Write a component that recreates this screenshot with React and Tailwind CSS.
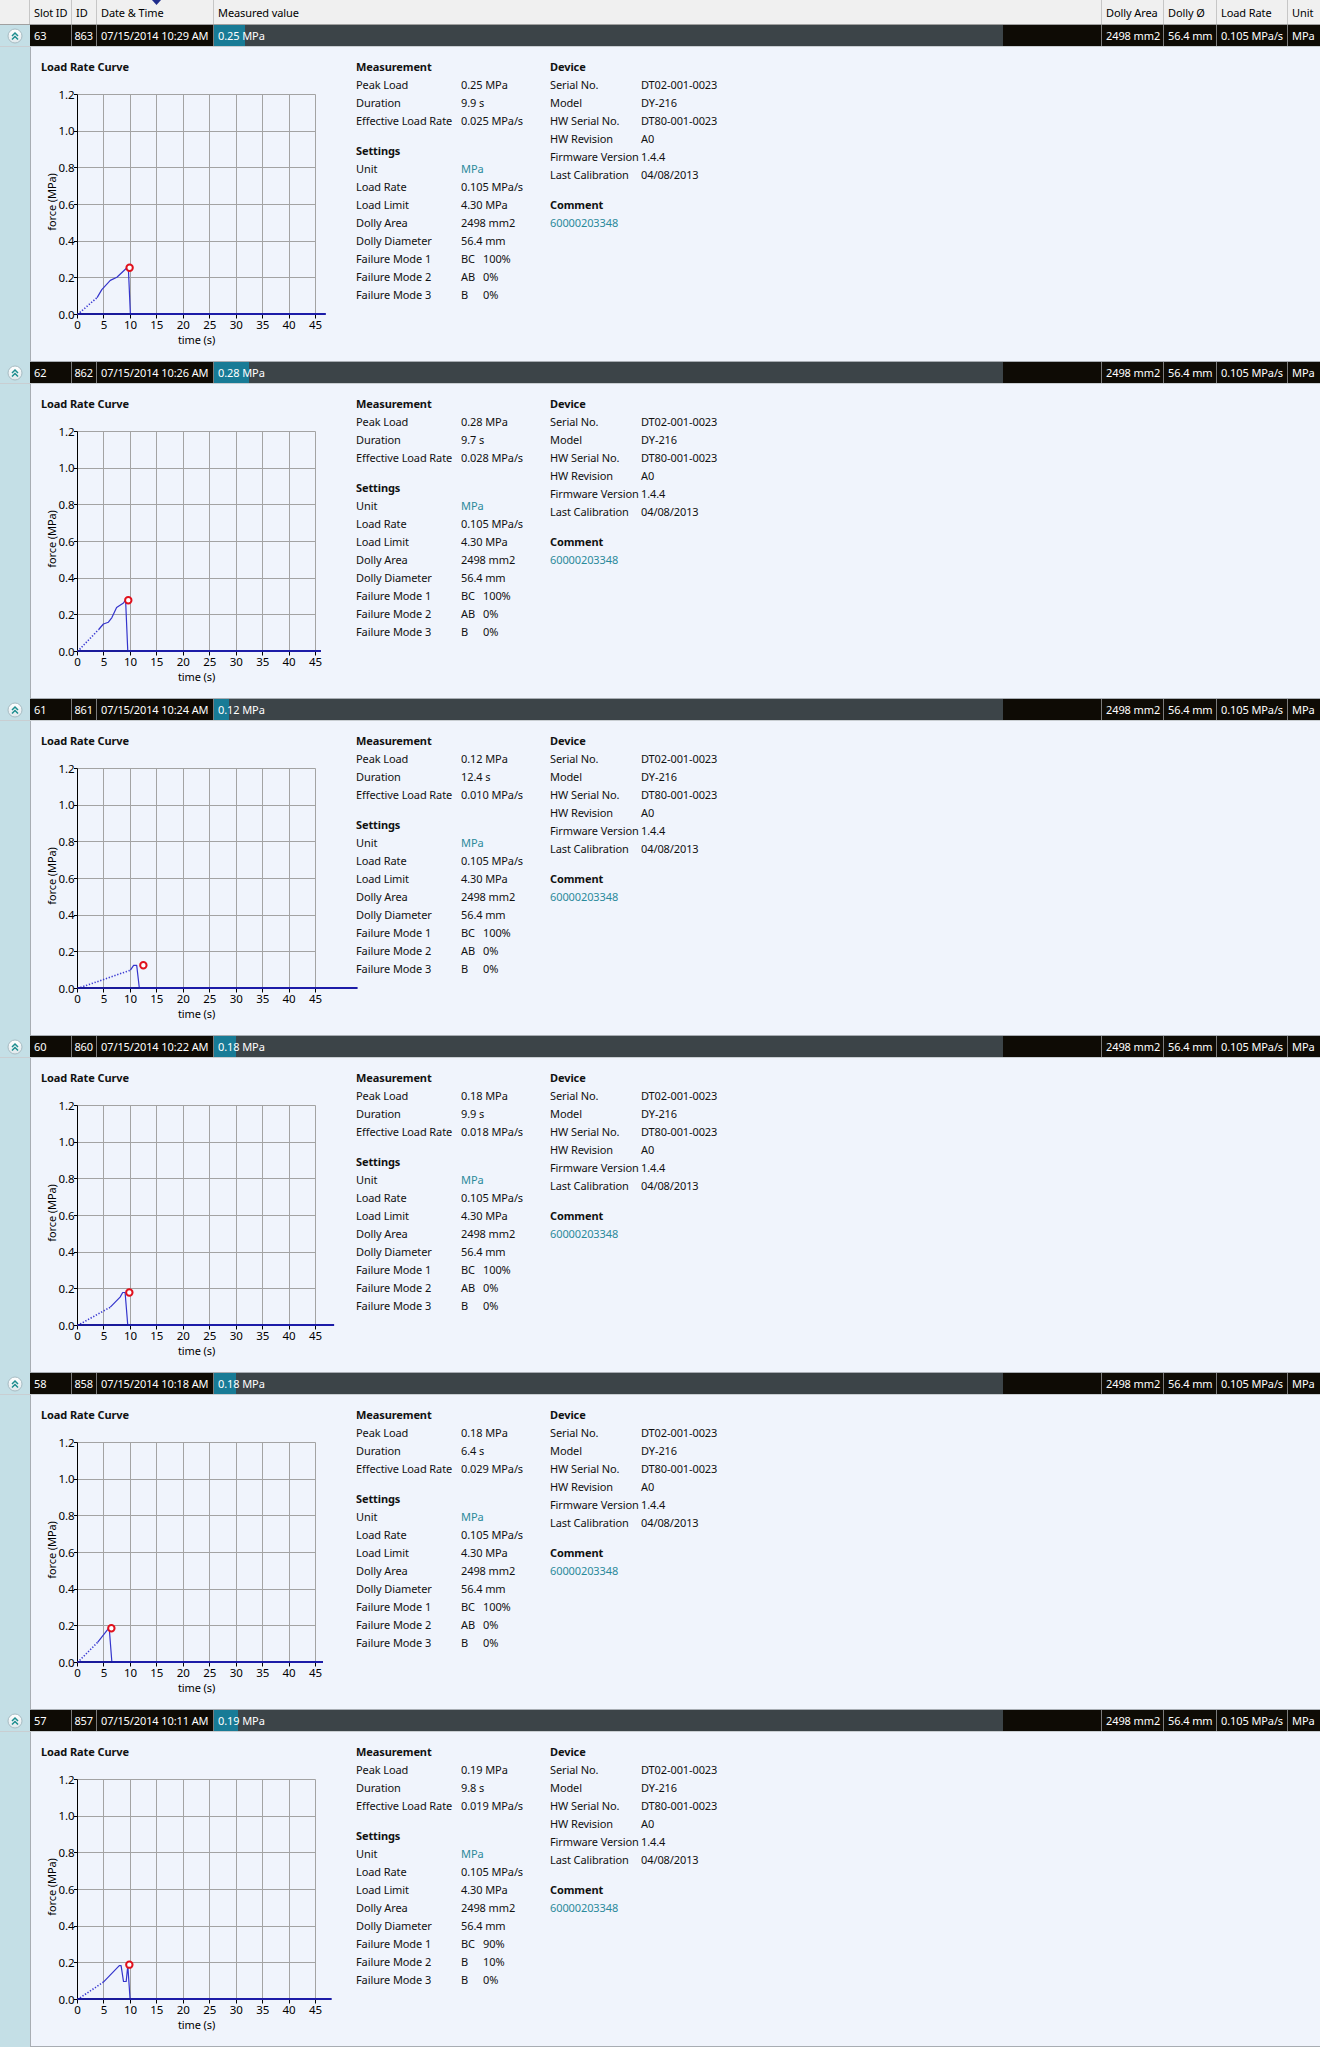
import React from "react";

const X0 = 36.5;
const Y0 = 239.5;
const SX = 5.29;
const SY = 183.3;
const px = (t) => X0 + t * SX;
const py = (f) => Y0 - f * SY;
const snap = (v) => Math.round(v - 0.5) + 0.5;
const pts = (arr) => arr.map(([t, f]) => `${px(t).toFixed(1)},${py(f).toFixed(1)}`).join(" ");

const columns = [
  { w: "w-[42px]", label: "Slot ID" },
  { w: "w-[25px]", label: "ID" },
  { w: "w-[117px]", label: "Date & Time", sort: true },
  { w: "w-[888px]", label: "Measured value" },
  { w: "w-[62px]", label: "Dolly Area" },
  { w: "w-[53px]", label: "Dolly Ø" },
  { w: "w-[71px]", label: "Load Rate" },
  { w: "w-[32px]", label: "Unit", last: true },
];

const records = [
  {
    slot: 63, id: 863, time: "10:29 AM", value: 0.25, duration: "9.9 s", eff: "0.025 MPa/s",
    modes: [["BC", "100%"], ["AB", "0%"], ["B", "0%"]],
    curve: {
      dotted: [[0, 0], [3.7, 0.092]],
      solid: [[3.7, 0.092], [4.6, 0.136], [6.2, 0.186], [7.45, 0.203], [9.6, 0.262], [10, 0]],
      peak: [9.85, 0.255],
      end: 46.9,
    },
  },
  {
    slot: 62, id: 862, time: "10:26 AM", value: 0.28, duration: "9.7 s", eff: "0.028 MPa/s",
    modes: [["BC", "100%"], ["AB", "0%"], ["B", "0%"]],
    curve: {
      dotted: [[0, 0], [4, 0.12]],
      solid: [[4, 0.12], [4.9, 0.15], [5.85, 0.16], [6.5, 0.185], [7.4, 0.24], [8.7, 0.265], [9.1, 0.28], [9.5, 0]],
      peak: [9.6, 0.28],
      end: 46,
    },
  },
  {
    slot: 61, id: 861, time: "10:24 AM", value: 0.12, duration: "12.4 s", eff: "0.010 MPa/s",
    modes: [["BC", "100%"], ["AB", "0%"], ["B", "0%"]],
    curve: {
      dotted: [[0, 0], [10, 0.1]],
      solid: [[10, 0.1], [10.6, 0.126], [11.2, 0.126], [11.7, 0]],
      peak: [12.45, 0.127],
      end: 52.9,
    },
  },
  {
    slot: 60, id: 860, time: "10:22 AM", value: 0.18, duration: "9.9 s", eff: "0.018 MPa/s",
    modes: [["BC", "100%"], ["AB", "0%"], ["B", "0%"]],
    curve: {
      dotted: [[0, 0], [6.2, 0.1]],
      solid: [[6.2, 0.1], [8.05, 0.155], [8.55, 0.18], [9.0, 0.18], [9.5, 0]],
      peak: [9.8, 0.18],
      end: 48.5,
    },
  },
  {
    slot: 58, id: 858, time: "10:18 AM", value: 0.18, duration: "6.4 s", eff: "0.029 MPa/s",
    modes: [["BC", "100%"], ["AB", "0%"], ["B", "0%"]],
    curve: {
      dotted: [[0, 0], [3.8, 0.11]],
      solid: [[3.8, 0.11], [6.0, 0.19], [6.5, 0]],
      peak: [6.4, 0.187],
      end: 46.4,
    },
  },
  {
    slot: 57, id: 857, time: "10:11 AM", value: 0.19, duration: "9.8 s", eff: "0.019 MPa/s",
    modes: [["BC", "90%"], ["B", "10%"], ["B", "0%"]],
    curve: {
      dotted: [[0, 0], [4.9, 0.095]],
      solid: [[4.9, 0.095], [7.9, 0.185], [8.25, 0.185], [8.7, 0.098], [9.2, 0.098], [9.5, 0.185], [9.95, 0]],
      peak: [9.8, 0.19],
      end: 48,
    },
  },
];

function Chart({ curve }) {
  const xs = [0, 5, 10, 15, 20, 25, 30, 35, 40, 45];
  const ys = [0, 0.2, 0.4, 0.6, 0.8, 1.0, 1.2];
  const top = snap(py(1.2));
  const right = snap(px(45));
  const drop = curve.solid[curve.solid.length - 1][0];
  const font = "Noto Sans, sans-serif";
  return (
    <svg width="315" height="275" className="block overflow-visible">
      {xs.slice(1).map((t) => (
        <line key={`v${t}`} x1={snap(px(t))} x2={snap(px(t))} y1={top} y2={Y0} stroke="#a3a3a3" />
      ))}
      {ys.slice(1).map((f) => (
        <line key={`h${f}`} x1={X0} x2={right} y1={snap(py(f))} y2={snap(py(f))} stroke="#a3a3a3" />
      ))}
      <line x1={X0} x2={X0} y1={top} y2={Y0 + 1} stroke="#000" />
      {ys.map((f) => (
        <line key={`yt${f}`} x1={X0 - 3.5} x2={X0} y1={snap(py(f))} y2={snap(py(f))} stroke="#000" />
      ))}
      {xs.map((t) => (
        <line key={`xt${t}`} x1={snap(px(t))} x2={snap(px(t))} y1={Y0} y2={Y0 + 4} stroke="#000" />
      ))}
      <line x1={X0} x2={px(45)} y1={Y0} y2={Y0} stroke="#000" />
      {ys.map((f) => (
        <text key={`yl${f}`} x={X0 - 3} y={py(f) + 4} textAnchor="end" fontSize="11.5" fontFamily={font} fill="#000">
          {f.toFixed(1)}
        </text>
      ))}
      {xs.map((t) => (
        <text key={`xl${t}`} x={px(t)} y={253.5} textAnchor="middle" fontSize="11.5" fontFamily={font} fill="#000">
          {t}
        </text>
      ))}
      <text x={(X0 + right) / 2} y={268.5} textAnchor="middle" fontSize="11" fontFamily={font} fill="#000">
        time (s)
      </text>
      <text transform="translate(15 127) rotate(-90)" textAnchor="middle" fontSize="11" fontFamily={font} fill="#000">
        force (MPa)
      </text>

      <polyline points={pts(curve.dotted)} fill="none" stroke="#3a3ad2" strokeWidth="1.6" strokeDasharray="1.3 1.7" />
      <polyline points={pts(curve.solid)} fill="none" stroke="#3434cc" strokeWidth="1.2" strokeLinejoin="round" />
      <line x1={X0} x2={px(curve.end)} y1={Y0 - 0.5} y2={Y0 - 0.5} stroke="#1a1a9a" strokeWidth="2" />
      <line x1={px(drop)} x2={px(curve.end)} y1={Y0 - 0.5} y2={Y0 - 0.5} stroke="#1c1ca8" strokeWidth="2" />
      <circle cx={px(curve.peak[0])} cy={py(curve.peak[1])} r="3.2" fill="#fff" stroke="#e0101c" strokeWidth="2" />
    </svg>
  );
}

function Row({ label, w, children }) {
  return (
    <div className="flex h-[18px] items-center whitespace-nowrap">
      <div className={w}>{label}</div>
      <div>{children}</div>
    </div>
  );
}

function Heading({ children, className = "" }) {
  return <div className={`h-[18px] flex items-center font-bold ${className}`}>{children}</div>;
}

function ToggleIcon() {
  return (
    <svg width="16" height="16" viewBox="0 0 16 16">
      <defs>
        <linearGradient id="tg" x1="0" y1="0" x2="0" y2="1">
          <stop offset="0" stopColor="#ffffff" />
          <stop offset="1" stopColor="#dfe8ec" />
        </linearGradient>
      </defs>
      <circle cx="8" cy="8" r="7" fill="url(#tg)" stroke="#a7bcc3" />
      <polyline points="5,8 8,5 11,8" fill="none" stroke="#1d8d8f" strokeWidth="1.5" />
      <polyline points="5,11.5 8,8.5 11,11.5" fill="none" stroke="#1d8d8f" strokeWidth="1.5" />
    </svg>
  );
}

function Record({ r }) {
  const barW = Math.round(r.value * 124);
  return (
    <div className="flex flex-col">
      {/* summary row */}
      <div className="flex h-[22px] border-b border-[#c9ced2] text-white">
        <div className="w-[30px] bg-[#c4dfe6] flex items-center justify-center">
          <ToggleIcon />
        </div>
        <div className="w-[42px] bg-[#0e0b05] border-r border-[#7b7b7b] pl-[4px] flex items-center">{r.slot}</div>
        <div className="w-[25px] bg-[#0e0b05] border-r border-[#7b7b7b] pr-[3px] flex items-center justify-end">{r.id}</div>
        <div className="w-[117px] bg-[#0e0b05] border-r border-[#7b7b7b] pl-[4px] flex items-center whitespace-nowrap overflow-hidden">
          07/15/2014 {r.time}
        </div>
        <div className="relative w-[888px] bg-[#0e0b05] border-r border-[#7b7b7b] flex">
          <div className="flex w-[789px] h-full">
            <div className="h-full bg-[#187b96]" style={{ width: barW }} />
            <div className="h-full flex-1 bg-[#3c4448]" />
          </div>
          <div className="absolute inset-y-0 left-[4px] flex items-center whitespace-nowrap">{r.value.toFixed(2)} MPa</div>
        </div>
        <div className="w-[62px] bg-[#0e0b05] border-r border-[#7b7b7b] pl-[4px] flex items-center whitespace-nowrap overflow-hidden">2498 mm2</div>
        <div className="w-[53px] bg-[#0e0b05] border-r border-[#7b7b7b] pl-[4px] flex items-center whitespace-nowrap overflow-hidden">56.4 mm</div>
        <div className="w-[71px] bg-[#0e0b05] border-r border-[#7b7b7b] pl-[4px] flex items-center whitespace-nowrap overflow-hidden">0.105 MPa/s</div>
        <div className="w-[32px] bg-[#0e0b05] pl-[4px] flex items-center whitespace-nowrap overflow-hidden">MPa</div>
      </div>

      {/* details */}
      <div className="flex h-[315px]">
        <div className="w-[30px] bg-[#c4dfe6]" />
        <div className="flex flex-1 bg-[#f0f4fc] border-l border-b border-[#a8adb3] pt-[10px] text-[#111]">
          <div className="w-[325px] pl-[10px] flex flex-col">
            <Heading>Load Rate Curve</Heading>
            <Chart curve={r.curve} />
          </div>

          <div className="w-[194px] flex flex-col">
            <Heading>Measurement</Heading>
            <Row label="Peak Load" w="w-[105px]">{r.value.toFixed(2)} MPa</Row>
            <Row label="Duration" w="w-[105px]">{r.duration}</Row>
            <Row label="Effective Load Rate" w="w-[105px]">{r.eff}</Row>
            <Heading className="mt-[12px]">Settings</Heading>
            <Row label="Unit" w="w-[105px]"><span className="text-[#2b8a9b]">MPa</span></Row>
            <Row label="Load Rate" w="w-[105px]">0.105 MPa/s</Row>
            <Row label="Load Limit" w="w-[105px]">4.30 MPa</Row>
            <Row label="Dolly Area" w="w-[105px]">2498 mm2</Row>
            <Row label="Dolly Diameter" w="w-[105px]">56.4 mm</Row>
            {r.modes.map(([code, pct], i) => (
              <Row key={i} label={`Failure Mode ${i + 1}`} w="w-[105px]">
                <span className="inline-block w-[22px]">{code}</span>
                {pct}
              </Row>
            ))}
          </div>

          <div className="flex-1 flex flex-col">
            <Heading>Device</Heading>
            <Row label="Serial No." w="w-[91px]">DT02-001-0023</Row>
            <Row label="Model" w="w-[91px]">DY-216</Row>
            <Row label="HW Serial No." w="w-[91px]">DT80-001-0023</Row>
            <Row label="HW Revision" w="w-[91px]">A0</Row>
            <Row label="Firmware Version" w="w-[91px]">1.4.4</Row>
            <Row label="Last Calibration" w="w-[91px]">04/08/2013</Row>
            <Heading className="mt-[12px]">Comment</Heading>
            <div className="h-[18px] flex items-center text-[#2b8a9b]">60000203348</div>
          </div>
        </div>
      </div>
    </div>
  );
}

export default function App() {
  return (
    <div className="w-[1320px] bg-white font-['Noto_Sans',sans-serif] text-[11px] tracking-[-0.1px] leading-none">
      {/* column header */}
      <div className="flex h-[25px] bg-[#f0f0f0] border-b border-[#a0a0a0] text-black">
        <div className="w-[30px] border-r border-[#c6c6c6]" />
        {columns.map((c) => (
          <div
            key={c.label}
            className={`${c.w} relative flex items-center pl-[4px] whitespace-nowrap overflow-hidden ${c.last ? "" : "border-r border-[#c6c6c6]"}`}
          >
            {c.sort && (
              <svg width="9" height="6" viewBox="0 0 9 6" className="absolute top-0 left-[55px]">
                <polygon points="0,0 9,0 4.5,5" fill="#1f2d8c" />
              </svg>
            )}
            {c.label}
          </div>
        ))}
      </div>

      {records.map((r) => (
        <Record key={r.id} r={r} />
      ))}
    </div>
  );
}
